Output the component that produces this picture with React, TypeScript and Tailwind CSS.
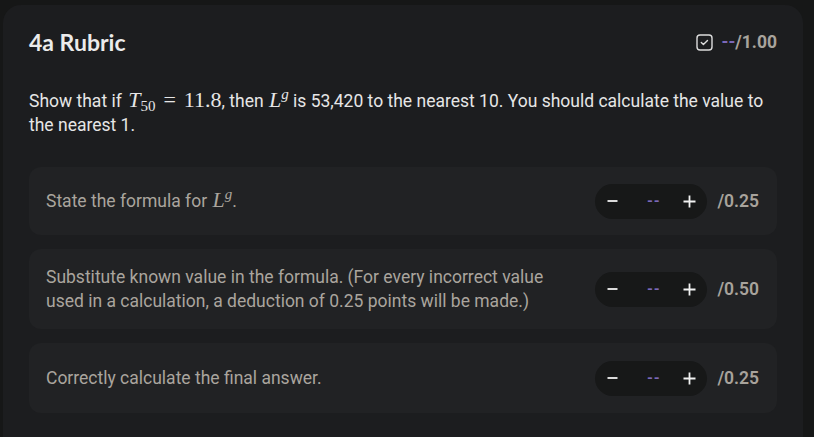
import React from "react";

const serif = { fontFamily: '"Liberation Serif", "DejaVu Serif", serif' };

function Var({ children }: { children: React.ReactNode }) {
  return (
    <span className="italic text-[22px] leading-[0]" style={serif}>
      {children}
    </span>
  );
}

function Lg() {
  return (
    <span className="whitespace-nowrap ml-[1px]">
      <Var>L</Var>
      <span className="inline-block italic text-[15px] leading-[0] align-[8px]" style={serif}>g</span>
    </span>
  );
}

function Stepper({ max }: { max: string }) {
  return (
    <div className="flex items-center gap-[10px] shrink-0">
      <div className="flex items-center h-[35px] w-[112px] rounded-full bg-[#171818] pl-[12px] pr-[11px] justify-between">
        <svg width="11" height="12" viewBox="0 0 11 12"><path d="M0.5 6h10" stroke="#f2f2f2" strokeWidth="1.8" /></svg>
        <span className="text-[#7b68b8] font-bold text-[15px] tracking-[1px] ml-[6px]">--</span>
        <svg width="13" height="13" viewBox="0 0 13 13"><path d="M0.5 6.5h12M6.5 0.5v12" stroke="#f2f2f2" strokeWidth="1.8" /></svg>
      </div>
      <span className="text-[#a8a39c] font-semibold text-[17.5px]">{max}</span>
    </div>
  );
}

function Row({ children, max, h }: { children: React.ReactNode; max: string; h: string }) {
  return (
    <div className={`flex items-center justify-between rounded-[12px] bg-[#212224] pl-[17px] pr-[18px] ${h}`}>
      <div className="text-[#aaa59e] text-[17.5px] leading-[24px] max-w-[520px]">{children}</div>
      <Stepper max={max} />
    </div>
  );
}

export default function App() {
  return (
    <div className="w-[814px] h-[437px] bg-[#161717] pt-[5px] pl-[3px] overflow-hidden" style={{ fontFamily: 'Roboto, "Liberation Sans", sans-serif' }}>
      <div className="w-[800px] h-[460px] rounded-[18px] bg-[#1c1d1f] pt-[23px] px-[26px]">
        <div className="flex items-center justify-between h-[28px]">
          <h1 className="text-[#ebebeb] font-bold text-[23px]" style={{ fontFamily: 'Lato, "Open Sans", sans-serif' }}>4a Rubric</h1>
          <div className="flex items-center gap-[9px]">
            <svg width="17" height="17" viewBox="0 0 17 17">
              <rect x="1" y="1" width="15" height="15" rx="3" fill="none" stroke="#dcdcdc" strokeWidth="1.4" />
              <path d="M5.3 8.6l2.1 2 4.1-4.2" fill="none" stroke="#dcdcdc" strokeWidth="1.4" strokeLinecap="round" strokeLinejoin="round" />
            </svg>
            <span className="font-bold text-[17.5px]"><span className="text-[#7b68b8]">--</span><span className="text-[#a8a39c]">/1.00</span></span>
          </div>
        </div>
        <p className="mt-[33px] text-[#e6e6e6] text-[17.5px] leading-[24px]">
          Show that if <span className="ml-[2px]"><Var>T</Var></span>
          <span className="inline-block text-[15px] leading-[0] align-[-4px]" style={serif}>50</span>
          <span className="text-[22px] mx-[8px] leading-[0]" style={serif}>=</span>
          <span className="text-[22px] leading-[0]" style={serif}>11.8</span>, then <Lg /> is 53,420 to the nearest 10. You should calculate the value to the nearest 1.
        </p>
        <div className="mt-[30px] flex flex-col gap-[14px]">
          <Row max="/0.25" h="h-[68px]">
            State the formula for <Lg />.
          </Row>
          <Row max="/0.50" h="h-[80px]">
            Substitute known value in the formula. (For every incorrect value used in a calculation, a deduction of 0.25 points will be made.)
          </Row>
          <Row max="/0.25" h="h-[70px]">
            Correctly calculate the final answer.
          </Row>
        </div>
      </div>
    </div>
  );
}
